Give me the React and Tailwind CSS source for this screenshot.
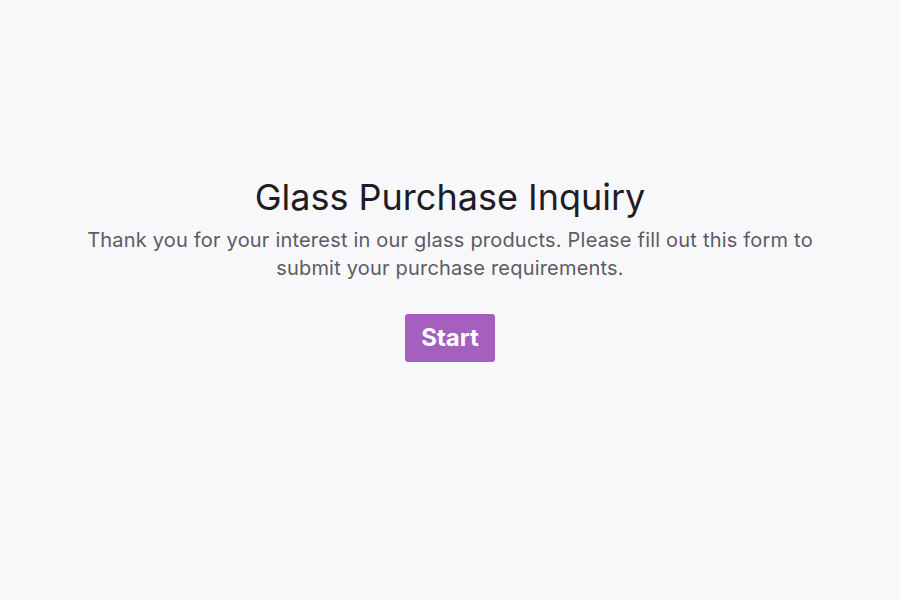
export default function App() {
  return (
    <div className="min-h-screen bg-[#f8f8fb] flex flex-col items-center pt-[177px] px-6 font-['Inter',sans-serif]">
      <h1 className="text-[36px] leading-[40px] text-[#1f1d24] text-center">Glass Purchase Inquiry</h1>
      <p className="mt-[9px] max-w-[740px] text-center text-[20px] leading-[28px] tracking-[0.2px] text-[#5c5b63]">
        Thank you for your interest in our glass products. Please fill out this form to submit your purchase requirements.
      </p>
      <button className="mt-[32px] h-[48px] px-4 rounded-[3px] bg-[#a55fbe] text-white text-[24px] font-bold">
        Start
      </button>
    </div>
  );
}
